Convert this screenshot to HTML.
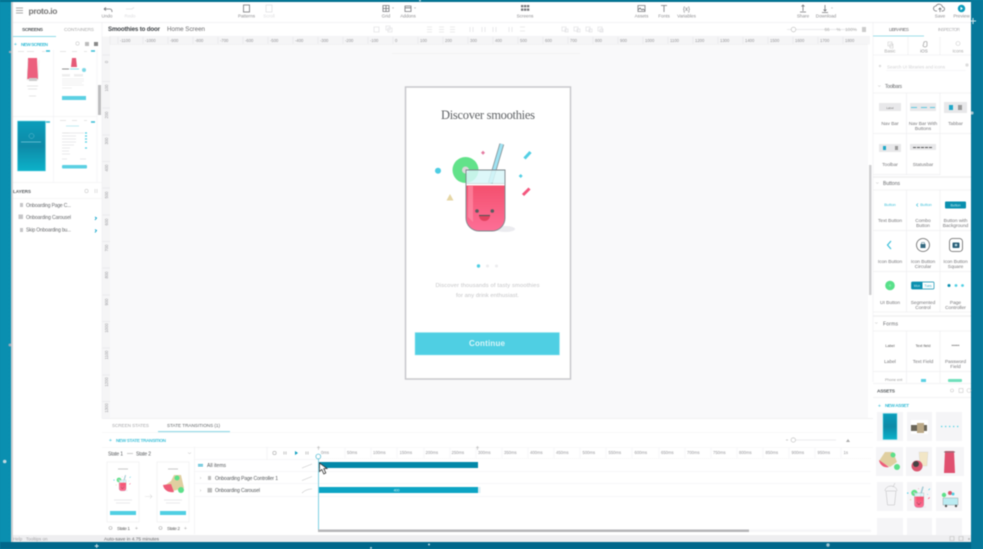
<!DOCTYPE html>
<html><head><meta charset="utf-8"><title>Proto.io</title>
<style>
html,body{margin:0;padding:0;width:983px;height:549px;overflow:hidden;background:#0a86a6}
svg{display:block;position:absolute;left:0;top:0;filter:blur(.45px);font-family:"Liberation Sans",sans-serif}
.l{font-size:4.6px;fill:#8d8d90;text-anchor:middle}
.r{font-size:4.2px;fill:#97979b}
.c{font-size:4.8px;fill:#77777a;text-anchor:middle}
.h{font-size:5px;fill:#666}
.i{fill:none;stroke:#77777b;stroke-width:.8}
</style></head><body>
<svg width="983" height="549" viewBox="0 0 983 549" xmlns="http://www.w3.org/2000/svg">
<defs>
<linearGradient id="bg" x1="0" x2="1" y1="0" y2="0"><stop offset="0" stop-color="#0a8fb0"/><stop offset="1" stop-color="#03789a"/></linearGradient>
<linearGradient id="tl" x1="0" x2="0" y1="0" y2="1"><stop offset="0" stop-color="#0a9dbb"/><stop offset=".5" stop-color="#0e8aa7"/><stop offset="1" stop-color="#0cb2ca"/></linearGradient>
<linearGradient id="pk" x1="0" x2="0" y1="0" y2="1"><stop offset="0" stop-color="#f4506e"/><stop offset="1" stop-color="#fd6f97"/></linearGradient>
<g id="glass">
<ellipse cx="505" cy="229" rx="10" ry="3" fill="#ebebef"/>
<path d="M501.800 144l-11.500 39" stroke="#7d8a8e" stroke-width="4.800"/>
<path d="M501.800 144l-11.500 39" stroke="#9fe2f2" stroke-width="3.200"/>
<circle cx="465.500" cy="170" r="13" fill="#62e28a"/><circle cx="465.500" cy="170" r="3.500" fill="#d9d9d9"/>
<path d="M466 170h39v13h-39z" fill="#d7f6f8" opacity=".85"/>
<path d="M466 185.500h39v32.500a13 13 0 0 1-13 13h-13a13 13 0 0 1-13-13z" fill="url(#pk)"/>
<path d="M468 186h5v36l-5-5z" fill="#ff96ae" opacity=".6"/>
<path d="M466 170h39v48a13 13 0 0 1-13 13h-13a13 13 0 0 1-13-13z" fill="none" stroke="#7d868b" stroke-width=".9"/>
<path d="M466 183.500h39" stroke="#8fa8ae" stroke-width=".4"/>
<circle cx="477" cy="211" r="1.800" fill="#5b5b5f"/><circle cx="492.300" cy="211" r="1.800" fill="#5b5b5f"/>
<path d="M479 215.500h11a5.500 5.500 0 0 1-11 0z" fill="#e2415f"/><path d="M479 215.500h11" stroke="#555" stroke-width="1.100"/>
<circle cx="438" cy="170.700" r="3" fill="#4dcde3"/>
<path d="M450 194l3.500 6.500h-7z" fill="#e6d6a4"/>
<path d="M483 150.700l2 2-2 2-2-2z" fill="#e47aa0"/>
<path d="M524.500 158.500l6-6.500" stroke="#52cfe4" stroke-width="3"/>
<path d="M520.700 174l2 2-2 2-2-2z" fill="#52cfe4"/>
<path d="M523 195l6.500-6.500" stroke="#f4567d" stroke-width="3"/>
</g>
<g id="doc"><rect x="0" y="0" width="32" height="60" fill="#fff" stroke="#efeff1" stroke-width=".7"/><rect x="3" y="49" width="26" height="4" fill="#4fcfe3"/><path d="M7 38h18M9 41h14" stroke="#e2e2e4" stroke-width=".8"/><path d="M11 7h10" stroke="#bbb" stroke-width=".8"/></g>
</defs>

<!-- backdrop -->
<rect width="983" height="549" fill="url(#bg)"/>
<rect width="983" height="2" fill="#026f8e"/>
<rect y="542" width="983" height="7" fill="#00678a"/>
<rect x="971" y="0" width="12" height="549" fill="#06789a"/>
<g fill="#bfd9e2">
<circle cx="4.700" cy="461.500" r="1.800"/><path d="M96.700 544v4M94.700 546h4" stroke="#cfe3ea"/>
<circle cx="429" cy="544.500" r="1"/><circle cx="371" cy="548" r="1"/><circle cx="828" cy="545" r="1.700" fill="#9fc5d2"/>
<path d="M973 18v6M970 21h6" stroke="#cfe3ea"/><circle cx="972" cy="113" r="1.600" fill="#a8c6d0"/>
<circle cx="420" cy="0.500" r="1"/><circle cx="10" cy="345" r="1.500" fill="#9ab"/><circle cx="10" cy="52" r="1.200" fill="#9ab"/>
</g>

<!-- app shell -->
<rect x="11" y="2" width="960" height="540" fill="#fff"/>
<rect x="11" y="2" width="2" height="540" fill="#cfd1d3"/>

<!-- top toolbar -->
<path d="M13 22.500h958M110 36.500h760" stroke="#f0f0f2" stroke-width=".8"/>
<path d="M16 8h7M16 10.500h7M16 13h7" stroke="#aaa" stroke-width="1"/>
<text x="28.500" y="14" font-size="8.500" font-weight="bold" fill="#777" textLength="29">proto.io</text>
<path class="i" d="M104 9h6q2 0 2 3M104 9l2-1.500M104 9l2 1.500"/>
<text class="l" x="107" y="17.500">Undo</text>
<text class="l" x="130" y="17.500" style="fill:#dcdcde">Redo</text>
<path d="M126 9h6l2-1.500" class="i" style="stroke:#e0e0e2"/>
<rect x="243.500" y="5" width="6" height="7" class="i"/><text class="l" x="246.500" y="17.500">Patterns</text>
<rect x="266" y="5" width="6" height="7" class="i" style="stroke:#e2e2e4"/><text class="l" x="269" y="17.500" style="fill:#dcdcde">Scroll</text>
<path class="i" d="M383 5.500h6v6h-6zM386 5.500v6M383 8.500h6"/><path d="M392 7.500h2l-1 1.200z" fill="#aaa"/><text class="l" x="386" y="17.500">Grid</text>
<path class="i" d="M405 6h6v5.500h-6zM405 7.800h6"/><path d="M414 7.500h2l-1 1.200z" fill="#aaa"/><text class="l" x="408" y="17.500">Addons</text>
<g fill="#77777b"><rect x="521" y="5" width="2.300" height="2.300"/><rect x="524" y="5" width="2.300" height="2.300"/><rect x="527" y="5" width="2.300" height="2.300"/><rect x="521" y="8.500" width="2.300" height="2.300"/><rect x="524" y="8.500" width="2.300" height="2.300"/><rect x="527" y="8.500" width="2.300" height="2.300"/></g>
<text class="l" x="525" y="17.500">Screens</text>
<path class="i" d="M638 5.500h7v6h-7zM638 10l2-2 2 2 1-1 2 1.500"/><text class="l" x="641.500" y="17.500">Assets</text>
<path class="i" d="M661 5.500h6M664 5.500v6.500"/><text class="l" x="664" y="17.500">Fonts</text>
<text x="686.500" y="11" font-size="6" fill="#77777b" text-anchor="middle">{x}</text><text class="l" x="686.500" y="17.500">Variables</text>
<path class="i" d="M803 5v6M801.500 6.500l1.500-1.500 1.500 1.500M800 12h6"/><text class="l" x="803" y="17.500">Share</text>
<path class="i" d="M825 5v6M823.500 9.500l1.500 1.500 1.500-1.500M822 12.500h6"/><path d="M831 7.500h2l-1 1.200z" fill="#bbb"/><text class="l" x="826" y="17.500">Download</text>
<path class="i" d="M937 11h-1a2.500 2.500 0 0 1 0-5 3.500 3.500 0 0 1 6.500 1 2 2 0 0 1 0 4h-1M940 12V8M938.500 9.500l1.500-1.500 1.500 1.500"/><text class="l" x="940" y="17.500">Save</text>
<circle cx="961.500" cy="8.500" r="3.700" fill="#0a9cbc"/><path d="M960.500 6.800l2.500 1.700-2.500 1.700z" fill="#fff"/><text class="l" x="961.500" y="17.500">Preview</text>

<!-- title row -->
<text x="108" y="31" font-size="6.200" font-weight="bold" fill="#3f4347" textLength="52">Smoothies to door</text>
<text x="167" y="31" font-size="6.200" fill="#6a6a6d" textLength="38">Home Screen</text>
<g fill="none" stroke="#e4e4e6" stroke-width=".8">
<path d="M374 27h5v5h-5zM386 26h4v4h-4zM388 28h4v4h-4z"/>
<path d="M427 27h5M427 29.500h5M427 32h5M439 27h5M439 29.500h5M439 32h5M450 27h5M450 29.500h5M450 32h5"/>
<path d="M470 27v5M473 27v5M482 27v5M485 27v5M493 27v5M496 27v5M509 27v5M512 27v5M520 27h5M520 31h5"/>
<path d="M562 27h4v4h-4zM565 29h3v3h-3zM574 27h4v4h-4zM577 29h3v3h-3zM586 27h4v4h-4zM589 29h3v3h-3zM598 27h4v4h-4zM600 29h3v3h-3z"/>
</g>
<path d="M787 29.500h70" stroke="#e4e4e6" stroke-width=".7"/>
<circle cx="793.500" cy="29.500" r="2.300" fill="#fff" stroke="#bbb" stroke-width=".6"/>
<text class="l" x="827" y="31" style="fill:#aaa">66</text><text class="l" x="838.500" y="31" style="fill:#aaa">%</text><text class="l" x="851" y="31" style="fill:#aaa">100%</text>
<path d="M862 27h4v5h-4z" fill="#ccc"/>

<!-- canvas -->
<rect x="110" y="44" width="758" height="374" fill="#f9f9fa"/>
<rect x="102" y="36.500" width="768" height="8" fill="#f5f5f6"/>
<rect x="102" y="36.500" width="8" height="382" fill="#f5f5f6"/>
<path d="M110 44.500h758" stroke="#e3e3e5" stroke-width=".5" stroke-dasharray="1 1"/>
<path d="M110 36v8" stroke="#e3e3e5" stroke-width=".5"/>
<path d="M118 37v7M143 37v7M168 37v7M193 37v7M218 37v7M243 37v7M268 37v7M293 37v7M318 37v7M343 37v7M368 37v7M393 37v7M418 37v7M443 37v7M468 37v7M493 37v7M518 37v7M543 37v7M568 37v7M593 37v7M618 37v7M643 37v7M668 37v7M693 37v7M718 37v7M743 37v7M768 37v7M793 37v7M818 37v7M843 37v7" stroke="#e2e2e4" stroke-width=".5"/>
<g class="r">
<text class="r" x="120" y="42">-1100</text><text class="r" x="145" y="42">-1000</text><text class="r" x="170" y="42">-900</text><text class="r" x="195" y="42">-800</text><text class="r" x="220" y="42">-700</text><text class="r" x="245" y="42">-600</text><text class="r" x="270" y="42">-500</text><text class="r" x="295" y="42">-400</text><text class="r" x="320" y="42">-300</text><text class="r" x="345" y="42">-200</text><text class="r" x="370" y="42">-100</text><text class="r" x="395" y="42">0</text><text class="r" x="420" y="42">100</text><text class="r" x="445" y="42">200</text><text class="r" x="470" y="42">300</text><text class="r" x="495" y="42">400</text><text class="r" x="520" y="42">500</text><text class="r" x="545" y="42">600</text><text class="r" x="570" y="42">700</text><text class="r" x="595" y="42">800</text><text class="r" x="620" y="42">900</text><text class="r" x="645" y="42">1000</text><text class="r" x="670" y="42">1100</text><text class="r" x="695" y="42">1200</text><text class="r" x="720" y="42">1300</text><text class="r" x="745" y="42">1400</text><text class="r" x="770" y="42">1500</text><text class="r" x="795" y="42">1600</text><text class="r" x="820" y="42">1700</text><text class="r" x="845" y="42">1800</text>
</g>
<path d="M102 55h8M102 81.500h8M102 108h8M102 135h8M102 161.500h8M102 188h8M102 215h8M102 241.500h8M102 268h8M102 295h8M102 321.500h8M102 348h8M102 375h8M102 401.500h8" stroke="#e2e2e4" stroke-width=".5"/>
<g text-anchor="middle">
<text class="r" transform="translate(108,62) rotate(-90)" text-anchor="middle">0</text>
<text class="r" transform="translate(108,88) rotate(-90)" text-anchor="middle">100</text>
<text class="r" transform="translate(108,115) rotate(-90)" text-anchor="middle">200</text>
<text class="r" transform="translate(108,141) rotate(-90)" text-anchor="middle">300</text>
<text class="r" transform="translate(108,168) rotate(-90)" text-anchor="middle">400</text>
<text class="r" transform="translate(108,195) rotate(-90)" text-anchor="middle">500</text>
<text class="r" transform="translate(108,222) rotate(-90)" text-anchor="middle">600</text>
<text class="r" transform="translate(108,248) rotate(-90)" text-anchor="middle">700</text>
<text class="r" transform="translate(108,275) rotate(-90)" text-anchor="middle">800</text>
<text class="r" transform="translate(108,302) rotate(-90)" text-anchor="middle">900</text>
<text class="r" transform="translate(108,328) rotate(-90)" text-anchor="middle">1000</text>
<text class="r" transform="translate(108,355) rotate(-90)" text-anchor="middle">1100</text>
<text class="r" transform="translate(108,382) rotate(-90)" text-anchor="middle">1200</text>
<text class="r" transform="translate(108,408) rotate(-90)" text-anchor="middle">1300</text>
</g>
<path d="M392 53.500h188" stroke="#efeff1" stroke-width=".7"/>
<rect x="869" y="165" width="2.500" height="130" fill="#cfcfd1"/>

<!-- phone -->
<rect x="405.500" y="87" width="165" height="292" fill="#fff" stroke="#c8c8cb" stroke-width="1.500"/>
<text x="488" y="119" font-family="Liberation Serif,serif" font-size="12.500" fill="#606366" text-anchor="middle" textLength="94">Discover smoothies</text>
<use href="#glass"/>
<circle cx="478.500" cy="266" r="1.700" fill="#4fcfe3"/><circle cx="487.500" cy="266" r="1.500" fill="#ececee"/><circle cx="496.500" cy="266" r="1.500" fill="#ececee"/>
<text x="487.500" y="287" font-size="5.800" fill="#c4c4c6" text-anchor="middle" textLength="104">Discover thousands of tasty smoothies</text>
<text x="487.500" y="297" font-size="5.800" fill="#c4c4c6" text-anchor="middle" textLength="63">for any drink enthusiast.</text>
<rect x="415" y="332.500" width="144.500" height="22.500" fill="#4fcfe3" stroke="#9be6f0" stroke-width=".5"/>
<text x="487" y="346" font-size="8" font-weight="bold" fill="#d8f5f9" text-anchor="middle" textLength="36">Continue</text>

<!-- left panel -->
<path d="M102 22.500v396" stroke="#efeff1" stroke-width=".6"/>
<text x="22" y="31" font-size="4.800" font-weight="bold" fill="#55595c" textLength="21">SCREENS</text>
<text x="64" y="31" font-size="4.800" fill="#aaa" textLength="30">CONTAINERS</text>
<rect x="13" y="36" width="43" height="1" fill="#8fdbe8"/>
<text x="14" y="46" font-size="5" fill="#35bcd6">+</text>
<text x="21" y="46" font-size="4.600" font-weight="bold" fill="#35bcd6" textLength="27">NEW SCREEN</text>
<circle cx="77.500" cy="43.500" r="1.700" fill="none" stroke="#ccc" stroke-width=".6"/>
<rect x="85" y="42" width="4" height="4" fill="#bbb"/><rect x="94" y="42" width="4" height="4" fill="#888"/>
<path d="M53.500 50v132M97 50v132M13 116.500h84" stroke="#f3f3f5" stroke-width=".7"/>
<rect x="98" y="85" width="3" height="30" fill="#bcbcbe"/>
<path d="M46 51h4M91 51h4M46 122h4M91 122h4" stroke="#35bcd6" stroke-width="1.500"/>
<path d="M18 51.500h6M27 51.500h7M42 51.500h3M60 51.500h6M72 51.500h5M84 51.500h3M60 120.500h6M72 120.500h5M84 120.500h3" stroke="#ddd" stroke-width=".7"/>
<path d="M28 58h9l1 21h-11z" fill="#ec5f7d"/><path d="M28 60l-1 20h11l1-20" fill="none" stroke="#ddd" stroke-width=".5"/><path d="M29 78h8v3h-8z" fill="#ccc"/>
<path d="M27 86h11M28 89h9M29 96h7" stroke="#ddd" stroke-width=".7"/>
<path d="M72 58h4l1 9h-6z" fill="#e55a78"/>
<path d="M62 69h7" stroke="#777" stroke-width=".8"/><path d="M70 69h9" stroke="#7ed8e6" stroke-width=".8"/><circle cx="84" cy="70" r="2" fill="#7ed8e6"/>
<rect x="62" y="74" width="8" height="2.500" fill="#eee"/><rect x="74" y="74" width="9" height="2.500" fill="#eee"/>
<path d="M62 79h22M62 81h22M62 83h20M62 85h22M62 88h10" stroke="#ebebed" stroke-width=".8"/>
<rect x="62" y="96" width="24" height="4" fill="#5bd0e3"/>
<rect x="17.500" y="121" width="28" height="50" fill="url(#tl)" stroke="#6fd5e3" stroke-width=".5"/>
<path d="M21 142h20" stroke="#78c8da" stroke-width=".8"/><circle cx="31.500" cy="136" r="2.500" fill="none" stroke="#60bcd0" stroke-width=".5"/>
<path d="M66 126h8M72 126h7" stroke="#aee6ee" stroke-width=".8"/>
<path d="M63 133h6" stroke="#ddd" stroke-width=".7"/><path d="M62 133h22M62 136h14M62 139h14M62 142h14M62 145h12M62 148h8M62 151h7M62 154h8M62 159h5M80 159h6" stroke="#e2e2e4" stroke-width=".7"/>
<path d="M85 133h2M85 136h2M85 139h2M85 142h2M85 148h2" stroke="#4fcfe3" stroke-width="1.300"/>
<rect x="62" y="165" width="25" height="3.500" rx="1" fill="#5bd0e3"/>

<path d="M13 182.500h89" stroke="#f3f3f5" stroke-width=".7"/>
<text x="13" y="193" font-size="4.600" fill="#55595c" font-weight="bold" textLength="18">LAYERS</text>
<path d="M13 198.500h89" stroke="#f3f3f5" stroke-width=".7"/>
<circle cx="86.500" cy="191" r="1.700" fill="none" stroke="#ccc" stroke-width=".6"/><path d="M95 189v4M97 189v4" stroke="#ccc" stroke-width=".6"/>
<rect x="20" y="203" width="3" height="4" fill="#c5c5c7"/><rect x="18.500" y="214.500" width="4.500" height="4.500" fill="#c5c5c7"/><rect x="20" y="228" width="3" height="4" fill="#c5c5c7"/>
<text x="26" y="207" font-size="5" fill="#66686b" textLength="45">Onboarding Page C...</text>
<text x="26" y="219" font-size="5" fill="#66686b" textLength="45">Onboarding Carousel</text>
<text x="26" y="231.500" font-size="5" fill="#66686b" textLength="45">Skip Onboarding bu...</text>
<path d="M95 217l1.500 1-1.500 2M95 229.500l1.500 1-1.500 2" stroke="#18a8cc" fill="none"/>

<!-- right panel -->
<path d="M873 22v360" stroke="#efeff1" stroke-width=".6"/>
<text x="889" y="31" font-size="4.600" fill="#707073" textLength="20">LIBRARIES</text>
<text x="938" y="31" font-size="4.600" fill="#b2b2b5" textLength="22">INSPECTOR</text>
<rect x="873" y="35.500" width="51" height="1" fill="#9ddde9"/>
<path d="M873 55h35M908 37v18h32v-18M940 55h31" stroke="#ececee" stroke-width=".6" fill="none"/>
<path d="M888 42h4v4h-4zM890 44h3v4h-3z" fill="none" stroke="#ccc" stroke-width=".6"/><text class="l" x="890" y="52.500" style="fill:#aaa">Basic</text>
<path d="M924 42q2-1 3 0v4q-2 2-4 0z" fill="none" stroke="#aaa" stroke-width=".8"/><text class="l" x="924" y="52.500">iOS</text>
<circle cx="958" cy="43.500" r="2" fill="none" stroke="#ccc" stroke-width=".6"/><text class="l" x="958" y="52.500" style="fill:#aaa">Icons</text>
<circle cx="880" cy="66" r="1.200" fill="#ddd"/>
<text x="887" y="68.500" font-size="4.600" fill="#d2d2d4" textLength="58">Search UI libraries and icons</text>
<path d="M886 70.500h80" stroke="#efeff1" stroke-width=".6"/><circle cx="967" cy="65" r="1.600" fill="#ddd"/>
<path d="M878 85.500l1.300 1 1.300-1" stroke="#bbb" fill="none" stroke-width=".5"/>
<text x="885" y="88" font-size="5" fill="#66686b" textLength="17">Toolbars</text>
<path d="M873 93h98M873 133.500h98M873 174.500h67M906.500 93v82M940 93v82" stroke="#efeff1" stroke-width=".7" fill="none"/>
<rect x="879" y="103" width="22" height="8" fill="#e8e8ea"/><text x="890" y="109" font-size="3" fill="#777" text-anchor="middle">Label</text>
<rect x="910" y="103" width="26" height="8" fill="#e8e8ea"/><path d="M911 107.500h6M921 107.500h6M930 107.500h5" stroke="#5ec7de"/>
<rect x="944" y="102" width="23" height="11" fill="#e8e8ea"/><path d="M949 105h4v5h-4z" fill="#20a8c8"/><path d="M958 105h4v5h-4z" fill="#999"/>
<text class="c" x="890" y="125">Nav Bar</text><text class="c" x="923" y="125">Nav Bar With</text><text class="c" x="923" y="130">Buttons</text><text class="c" x="955.500" y="125">Tabbar</text>
<rect x="879" y="144" width="22" height="8" fill="#e8e8ea"/><path d="M883 146h3v4h-3z" fill="#20a8c8"/><path d="M895 146h3v4h-3z" fill="#999"/>
<rect x="910" y="144" width="26" height="6" fill="#e8e8ea"/><path d="M913 147.500h20" stroke="#555" stroke-dasharray="3 1"/>
<text class="c" x="890" y="166">Toolbar</text><text class="c" x="923" y="166">Statusbar</text>
<path d="M873 177h98" stroke="#f0f0f2" stroke-width="1.500"/>
<path d="M876 182.500l1.300 1 1.300-1" stroke="#bbb" fill="none" stroke-width=".5"/>
<text x="883" y="185" font-size="5" fill="#66686b" textLength="17">Buttons</text>
<path d="M873 190h98M873 230.500h98M873 271.500h98M873 312h98M906.500 190v122M940 190v122" stroke="#efeff1" stroke-width=".7" fill="none"/>
<text x="890" y="206" font-size="4" fill="#3dc0da" text-anchor="middle">Button</text>
<path d="M918 203.500l-1.500 1.500 1.500 1.500" stroke="#3dc0da" fill="none" stroke-width=".7"/><text x="926" y="206" font-size="4" fill="#3dc0da" text-anchor="middle">Button</text>
<rect x="945" y="201.500" width="21" height="7" rx="1" fill="#0a8fae"/><text x="955.500" y="206.500" font-size="3.500" fill="#bfe9f2" text-anchor="middle">Button</text>
<text class="c" x="890" y="222">Text Button</text><text class="c" x="923" y="222">Combo</text><text class="c" x="923" y="227">Button</text><text class="c" x="955.500" y="222">Button with</text><text class="c" x="955.500" y="227">Background</text>
<path d="M891 241l-3.500 4 3.500 4" stroke="#3dc0da" fill="none" stroke-width="1.200"/>
<circle cx="923" cy="245" r="6.500" fill="#fff" stroke="#666" stroke-width=".8"/><rect x="920.500" y="244" width="5" height="4" fill="#356a80"/><path d="M921.500 244v-1.500h3v1.500" stroke="#356a80" fill="none" stroke-width=".5"/>
<rect x="949.500" y="238.500" width="13" height="13" rx="3" fill="#fff" stroke="#666" stroke-width=".8"/><rect x="952.500" y="242.500" width="7" height="5.500" rx="1" fill="#2a5f78"/><circle cx="956" cy="245" r="1.300" fill="#b7d5de"/>
<text class="c" x="890" y="263">Icon Button</text><text class="c" x="923" y="263">Icon Button</text><text class="c" x="923" y="268">Circular</text><text class="c" x="955.500" y="263">Icon Button</text><text class="c" x="955.500" y="268">Square</text>
<circle cx="890" cy="285.500" r="4.800" fill="#58e08a"/><path d="M888.500 285.500h3M890 284v3" stroke="#9cedb8" stroke-width=".6"/>
<rect x="911.500" y="282" width="22.500" height="7" rx="1" fill="#fff" stroke="#0a8fae" stroke-width=".7"/><path d="M911.500 282h11v7h-11z" fill="#0a8fae"/><text x="917" y="287" font-size="3.300" fill="#bfe9f2" text-anchor="middle">Mon</text><text x="928" y="287" font-size="3.300" fill="#2aa9c6" text-anchor="middle">Tues</text>
<circle cx="949" cy="285.500" r="1.500" fill="#0a8fae"/><circle cx="956" cy="285.500" r="1.400" fill="#4fcfe3"/><circle cx="962.500" cy="285.500" r="1.400" fill="#4fcfe3"/>
<text class="c" x="890" y="304">UI Button</text><text class="c" x="923" y="304">Segmented</text><text class="c" x="923" y="309">Control</text><text class="c" x="955.500" y="304">Page</text><text class="c" x="955.500" y="309">Controller</text>
<path d="M873 316h98" stroke="#f0f0f2" stroke-width="1.500"/>
<path d="M875 322.500l1.300 1 1.300-1" stroke="#bbb" fill="none" stroke-width=".5"/>
<text x="883" y="325.500" font-size="5" fill="#66686b" textLength="15">Forms</text>
<path d="M873 331h98M873 371.500h98M906.500 331v52M940 331v52" stroke="#efeff1" stroke-width=".7" fill="none"/>
<text x="890" y="347" font-size="3.800" fill="#555" text-anchor="middle">Label</text><text x="923" y="347" font-size="3.800" fill="#555" text-anchor="middle">Text field</text><text x="955.500" y="347" font-size="4.500" fill="#777" text-anchor="middle">•••••</text>
<text class="c" x="890" y="363">Label</text><text class="c" x="923" y="363">Text Field</text><text class="c" x="955.500" y="363">Password</text><text class="c" x="955.500" y="368">Field</text>
<text x="885" y="381" font-size="3.800" fill="#999">Phone ent</text><rect x="921" y="379" width="5" height="3" fill="#5bd0e3"/><rect x="948" y="379" width="14" height="3" rx="1" fill="#6fe0bb"/>

<!-- assets -->
<rect x="873" y="383" width="98" height="152" fill="#fff"/>
<path d="M873 383.500h98M873 397.500h98" stroke="#efeff1" stroke-width=".7"/>
<text x="877" y="392.500" font-size="4.800" font-weight="bold" fill="#55595c" textLength="18">ASSETS</text>
<circle cx="952" cy="390.500" r="1.500" fill="none" stroke="#ccc" stroke-width=".6"/><rect x="959" y="388.500" width="4" height="4" fill="none" stroke="#ccc" stroke-width=".6"/><circle cx="969" cy="390.500" r="2" fill="none" stroke="#ccc" stroke-width=".6"/>
<text x="878" y="407.500" font-size="5" fill="#35bcd6">+</text>
<text x="885" y="407" font-size="4.600" font-weight="bold" fill="#35bcd6" textLength="24">NEW ASSET</text>
<g fill="#f5f5f7">
<rect x="877" y="412" width="26" height="29"/><rect x="907" y="412" width="25" height="29"/><rect x="936" y="412" width="26" height="29"/>
<rect x="876" y="447" width="27" height="29"/><rect x="906" y="447" width="26" height="29"/><rect x="936" y="447" width="28" height="29"/>
<rect x="877" y="482" width="26" height="29"/><rect x="907" y="482" width="25" height="29"/><rect x="936" y="482" width="26" height="29"/>
<rect x="877" y="518" width="26" height="17"/><rect x="907" y="518" width="25" height="17"/><rect x="936" y="518" width="26" height="17"/>
</g>
<rect x="883" y="413.500" width="14" height="26" fill="url(#tl)" stroke="#5cd3e1" stroke-width=".5"/>
<rect x="911" y="420" width="17" height="14" fill="#fff"/><path d="M911 425h16v6h-16z" fill="#6b6659"/><path d="M917 423h7v10h-7z" fill="#bba987"/>
<path d="M941 426.500h20" stroke="#4fcfe3" stroke-width="1.200" stroke-dasharray="1.300 2.700"/>
<path d="M879 461l11 6 7-5-4-10h-8z" fill="#e0cfa0"/><path d="M879 460a8 8 0 0 0 10 7z" fill="#ee5c78"/><circle cx="897" cy="467" r="3" fill="#5de08a"/><circle cx="893" cy="455" r="2.500" fill="#5de08a"/>
<path d="M919 452h9l-1 14h-7z" fill="#f2e6c6" stroke="#ccc" stroke-width=".3"/><circle cx="917" cy="466" r="5.500" fill="#d9566f"/><circle cx="916" cy="464" r="3" fill="#444"/>
<path d="M945 451h9l1 22h-11z" fill="#e0506f"/><path d="M944 452h11" stroke="#777" stroke-width=".8"/>
<path d="M886 491h10l-1.500 14h-7zM885 491a6 5 0 0 1 12 0M895 483l-2 4" fill="none" stroke="#bcbcbe" stroke-width=".5"/>
<g transform="translate(919 497) scale(.24) translate(-485 -187)"><use href="#glass"/></g>
<rect x="943" y="498" width="15" height="7" fill="#bcecf2" stroke="#777" stroke-width=".3"/><circle cx="946" cy="506" r="1.200" fill="#555"/><circle cx="956" cy="506" r="1.200" fill="#555"/><circle cx="944" cy="495" r="2.200" fill="#5de08a"/><circle cx="950" cy="493" r="2" fill="#d9566f"/><circle cx="953" cy="494" r="1.500" fill="#4fcfe3"/>

<!-- bottom panel -->
<rect x="102" y="418" width="769" height="117" fill="#fff"/>
<path d="M102 418.500h771" stroke="#ececee" stroke-width=".7"/>
<path d="M102 432.500h771M102 447.500h771" stroke="#f1f1f3" stroke-width=".6"/>
<text x="112" y="427" font-size="4.600" fill="#a5a5a8" textLength="37">SCREEN STATES</text>
<text x="167" y="427" font-size="4.600" fill="#5f6265" textLength="53">STATE TRANSITIONS (1)</text>
<rect x="158" y="431" width="72" height="1.200" fill="#96dbe8"/>
<text x="109" y="442" font-size="5" fill="#35bcd6">+</text>
<text x="116" y="442" font-size="4.600" font-weight="bold" fill="#42c2da" textLength="50">NEW STATE TRANSITION</text>
<text x="108" y="455.500" font-size="5" fill="#55585b" textLength="15">State 1</text>
<path d="M127 453.500h6" stroke="#999" stroke-width=".5"/>
<text x="136" y="455.500" font-size="5" fill="#55585b" textLength="15">State 2</text>
<path d="M188 452.500l1.500 1.300 1.500-1.300" stroke="#bbb" fill="none" stroke-width=".5"/>
<path d="M194.500 447v87M267 447v13M194.500 459.500h124" stroke="#efeff1" stroke-width=".6"/>
<use href="#doc" x="107" y="462"/><use href="#doc" x="157" y="462"/>
<g transform="translate(122.500 483) scale(.18) translate(-485 -187)"><use href="#glass"/></g>
<g transform="translate(160 476)"><path d="M4 10l9 5 11-3-3-13h-7l-3 6z" fill="#e0cfa0"/><path d="M3 9a9 8 0 0 0 11 7l-3-8z" fill="#ee5c78"/><circle cx="21" cy="14" r="3" fill="#5de08a"/><circle cx="17" cy="2" r="2.500" fill="#5de08a"/></g>
<path d="M145 496.500h7M150 494.500l2 2-2 2" stroke="#ddd" fill="none" stroke-width=".6"/>
<circle cx="110.500" cy="528" r="1.500" fill="none" stroke="#aaa" stroke-width=".6"/><text x="117" y="530" font-size="4.800" fill="#666" textLength="13">State 1</text><text x="135" y="530" font-size="5" fill="#aaa">+</text>
<circle cx="160.500" cy="528" r="1.500" fill="none" stroke="#aaa" stroke-width=".6"/><text x="167" y="530" font-size="4.800" fill="#666" textLength="13">State 2</text><text x="184" y="530" font-size="5" fill="#aaa">+</text>
<circle cx="274.500" cy="453" r="1.700" fill="none" stroke="#aaa" stroke-width=".6"/>
<path d="M284 451.500v3M286 451.500v3M306 451.500v3M308 451.500v3" stroke="#aaa" stroke-width=".7"/>
<path d="M295 451l3 2-3 2z" fill="#0f9fbf"/>
<path d="M198 464.500h5M198 466h5" stroke="#3fb5d0" stroke-width=".9"/>
<text x="207" y="467" font-size="5" fill="#55585b" textLength="19">All items</text>
<path d="M200 477l1 1-1 1M200 489.500l1 1-1 1" stroke="#aaa" fill="none" stroke-width=".4"/>
<rect x="208" y="476" width="3" height="4" fill="#bbb"/><rect x="207.500" y="488" width="4.500" height="4.500" fill="#bbb"/>
<text x="215" y="480" font-size="5" fill="#55585b" textLength="63">Onboarding Page Controller 1</text>
<text x="215" y="492" font-size="5" fill="#55585b" textLength="45">Onboarding Carousel</text>
<path d="M302 468l10-4M302 480.500l10-4M302 493q4-4 10-4" stroke="#c5c5c7" fill="none" stroke-width=".6"/>
<path d="M194.500 471.500h676M194.500 483.500h676M194.500 496.500h676" stroke="#f0f0f2" stroke-width=".6"/>
<path d="M318 458.500h553" stroke="#e8e8ea" stroke-width=".5" stroke-dasharray="1 1"/>
<path d="M345 448v10M371 448v10M397 448v10M424 448v10M450 448v10M476 448v10M502 448v10M528 448v10M554 448v10M580 448v10M606 448v10M632 448v10M659 448v10M685 448v10M711 448v10M737 448v10M763 448v10M789 448v10M815 448v10M841 448v10" stroke="#eeeef0" stroke-width=".5"/>
<text class="r" x="321" y="454">0ms</text><text class="r" x="347" y="454">50ms</text><text class="r" x="373" y="454">100ms</text><text class="r" x="399.500" y="454">150ms</text><text class="r" x="425.500" y="454">200ms</text><text class="r" x="451.500" y="454">250ms</text><text class="r" x="478" y="454">300ms</text><text class="r" x="504" y="454">350ms</text><text class="r" x="530" y="454">400ms</text><text class="r" x="556" y="454">450ms</text><text class="r" x="582.500" y="454">500ms</text><text class="r" x="608.500" y="454">550ms</text><text class="r" x="634.500" y="454">600ms</text><text class="r" x="661" y="454">650ms</text><text class="r" x="687" y="454">700ms</text><text class="r" x="713" y="454">750ms</text><text class="r" x="739" y="454">800ms</text><text class="r" x="765.500" y="454">850ms</text><text class="r" x="791.500" y="454">900ms</text><text class="r" x="817.500" y="454">950ms</text><text class="r" x="843.500" y="454">1s</text>
<path d="M477.500 446v4M476 447.500h3M318.500 446v4M317 447.500h3" stroke="#aaa" stroke-width=".5"/>
<rect x="318" y="462" width="160" height="6" fill="#0288a8"/>
<rect x="318" y="487" width="160" height="6" fill="#0ca4c4"/><rect x="478" y="487" width="2.500" height="6" fill="#d8eef3"/>
<text x="396.500" y="491.500" font-size="3.500" fill="#d2f1f6" text-anchor="middle">400</text>
<path d="M318.500 459v71" stroke="#7fd0e2" stroke-width="1"/>
<circle cx="318.300" cy="456.500" r="2.400" fill="#fff" stroke="#5cbfd6" stroke-width=".8"/>
<path d="M319.500 463l0 8.500 2.300-2 2 4.500 2-1-2-4.300 3.200-.2z" fill="#fff" stroke="#333" stroke-width=".8"/>
<path d="M786 440h2" stroke="#aaa" stroke-width=".6"/><path d="M793 440h43" stroke="#ececee" stroke-width="1"/>
<circle cx="793.300" cy="440" r="2.200" fill="#fff" stroke="#bbb" stroke-width=".6"/><path d="M846 442l2-3 2 3z" fill="#aaa"/>
<rect x="318" y="529.500" width="431" height="2.500" fill="#b6b6b8"/><rect x="749" y="529.500" width="122" height="2.500" fill="#f6f6f7"/>

<!-- status bar -->
<rect x="13" y="535" width="958" height="7" fill="#eeeef0"/>
<text x="13" y="540.500" font-size="4.500" fill="#a5a5a8">Help</text><text x="26" y="540.500" font-size="4.500" fill="#a5a5a8">Tooltips on</text>
<text x="104" y="540.500" font-size="4.800" fill="#66686b" textLength="55">Auto-save in 4.75 minutes</text>
<path d="M950 536.500h4v4h-4zM959 536.500h4v4h-4z" fill="none" stroke="#bbb" stroke-width=".6"/><circle cx="969" cy="539" r="1" fill="#bbb"/>
</svg>
</body></html>
